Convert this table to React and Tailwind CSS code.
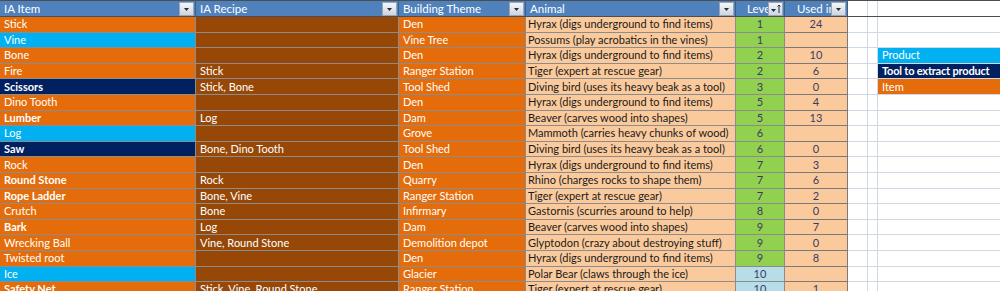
import React from "react";

// item colour: o = item (orange), c = product (cyan), n = tool (navy)
const rows = [
  ["Stick", "", "Den", "Hyrax (digs underground to find items)", "1", "24", "o", false],
  ["Vine", "", "Vine Tree", "Possums (play acrobatics in the vines)", "1", "", "c", false],
  ["Bone", "", "Den", "Hyrax (digs underground to find items)", "2", "10", "o", false],
  ["Fire", "Stick", "Ranger Station", "Tiger (expert at rescue gear)", "2", "6", "o", false],
  ["Scissors", "Stick, Bone", "Tool Shed", "Diving bird (uses its heavy beak as a tool)", "3", "0", "n", true],
  ["Dino Tooth", "", "Den", "Hyrax (digs underground to find items)", "5", "4", "o", false],
  ["Lumber", "Log", "Dam", "Beaver (carves wood into shapes)", "5", "13", "o", true],
  ["Log", "", "Grove", "Mammoth (carries heavy chunks of wood)", "6", "", "c", false],
  ["Saw", "Bone, Dino Tooth", "Tool Shed", "Diving bird (uses its heavy beak as a tool)", "6", "0", "n", true],
  ["Rock", "", "Den", "Hyrax (digs underground to find items)", "7", "3", "o", false],
  ["Round Stone", "Rock", "Quarry", "Rhino (charges rocks to shape them)", "7", "6", "o", true],
  ["Rope Ladder", "Bone, Vine", "Ranger Station", "Tiger (expert at rescue gear)", "7", "2", "o", true],
  ["Crutch", "Bone", "Infirmary", "Gastornis (scurries around to help)", "8", "0", "o", false],
  ["Bark", "Log", "Dam", "Beaver (carves wood into shapes)", "9", "7", "o", true],
  ["Wrecking Ball", "Vine, Round Stone", "Demolition depot", "Glyptodon (crazy about destroying stuff)", "9", "0", "o", false],
  ["Twisted root", "", "Den", "Hyrax (digs underground to find items)", "9", "8", "o", false],
  ["Ice", "", "Glacier", "Polar Bear (claws through the ice)", "10", "", "c", false],
  ["Safety Net", "Stick, Vine, Round Stone", "Ranger Station", "Tiger (expert at rescue gear)", "10", "1", "o", true],
];

const itemBg = { o: "bg-[#e46c0a]", c: "bg-[#00b0f0]", n: "bg-[#002060]" };

const legend = {
  2: ["Product", "bg-[#00b0f0]", ""],
  3: ["Tool to extract product", "bg-[#002060]", "font-bold tracking-[-0.2px]"],
  4: ["Item", "bg-[#e46c0a]", ""],
};

function FilterButton({ sorted }) {
  return (
    <div className="absolute right-[1px] top-[1px] w-[15px] h-[14px] flex items-center justify-center border border-[#9aa6b8] bg-gradient-to-b from-[#f4f6f9] to-[#cfd6e0]">
      <svg width="13" height="12" viewBox="0 0 13 12">
        {sorted ? (
          <>
            <path d="M2 6h5l-2.5 3z" fill="#1f2d44" />
            <path d="M10 2v8M8.5 3.5L10 2l1.5 1.5" stroke="#1f2d44" strokeWidth="1" fill="none" />
          </>
        ) : (
          <path d="M4 5h5l-2.5 3z" fill="#1f2d44" />
        )}
      </svg>
    </div>
  );
}

function HeaderCell({ width, label, center, sorted }) {
  return (
    <div className={`${width} relative h-full shrink-0 flex items-center bg-[#4f81bd] border-r border-[#3a5f8c] text-white overflow-hidden whitespace-nowrap ${center ? "justify-center" : "pl-[4px]"}`}>
      <span>{label}</span>
      <FilterButton sorted={sorted} />
    </div>
  );
}

export default function App() {
  return (
    <div className="w-[1000px] h-[291px] overflow-hidden bg-white font-['Lato',sans-serif] text-[11px] leading-[14px]">
      <div className="flex h-[17px] border-t border-b border-[#4d4d4d] text-[11.5px]">
        <HeaderCell width="w-[196px]" label="IA Item" />
        <HeaderCell width="w-[203px]" label="IA Recipe" />
        <HeaderCell width="w-[127px]" label="Building Theme" />
        <HeaderCell width="w-[210px]" label="Animal" />
        <HeaderCell width="w-[49px]" label="Level" center sorted />
        <HeaderCell width="w-[63px]" label="Used in" center />
        <div className="w-[20px] shrink-0 border-r border-[#d0d7e5]" />
        <div className="w-[10px] shrink-0 border-r border-[#d0d7e5]" />
        <div className="flex-1" />
      </div>

      {rows.map(([item, recipe, theme, animal, level, used, kind, bold], i) => {
        const lg = legend[i];
        return (
          <div key={i} className="flex h-[15.6px]">
            <div className={`w-[196px] shrink-0 border-r border-b border-[#8c8c8c] pl-[4px] flex items-center text-white whitespace-nowrap overflow-hidden ${itemBg[kind]} ${bold ? "font-bold" : ""}`}>{item}</div>
            <div className="w-[203px] shrink-0 border-r border-b border-[#8c8c8c] pl-[4px] flex items-center text-white whitespace-nowrap overflow-hidden bg-[#974807]">{recipe}</div>
            <div className="w-[127px] shrink-0 border-r border-b border-[#8c8c8c] pl-[4px] flex items-center text-white whitespace-nowrap overflow-hidden bg-[#e46c0a]">{theme}</div>
            <div className="w-[210px] shrink-0 border-r border-b border-[#8c8c8c] pl-[2px] flex items-center text-[#1a1a1a] whitespace-nowrap overflow-hidden bg-[#fbca9c]">{animal}</div>
            <div className={`w-[49px] shrink-0 border-r border-b border-[#8c8c8c] flex items-center justify-center text-[#3a3a66] ${level === "10" ? "bg-[#b7dee8]" : "bg-[#92d050]"}`}>{level}</div>
            <div className="w-[63px] shrink-0 border-r border-b border-[#7a7a7a] flex items-center justify-center text-[#3a3a66] bg-[#fbca9c]">{used}</div>
            <div className="w-[20px] shrink-0 border-r border-b border-[#d0d7e5]" />
            <div className="w-[10px] shrink-0 border-r border-b border-[#d0d7e5]" />
            {lg ? (
              <div className={`flex-1 border-b border-[#d0d7e5] pl-[4px] flex items-center text-white whitespace-nowrap ${lg[1]} ${lg[2]}`}>{lg[0]}</div>
            ) : (
              <div className="flex-1 border-b border-[#d0d7e5]" />
            )}
          </div>
        );
      })}
    </div>
  );
}
